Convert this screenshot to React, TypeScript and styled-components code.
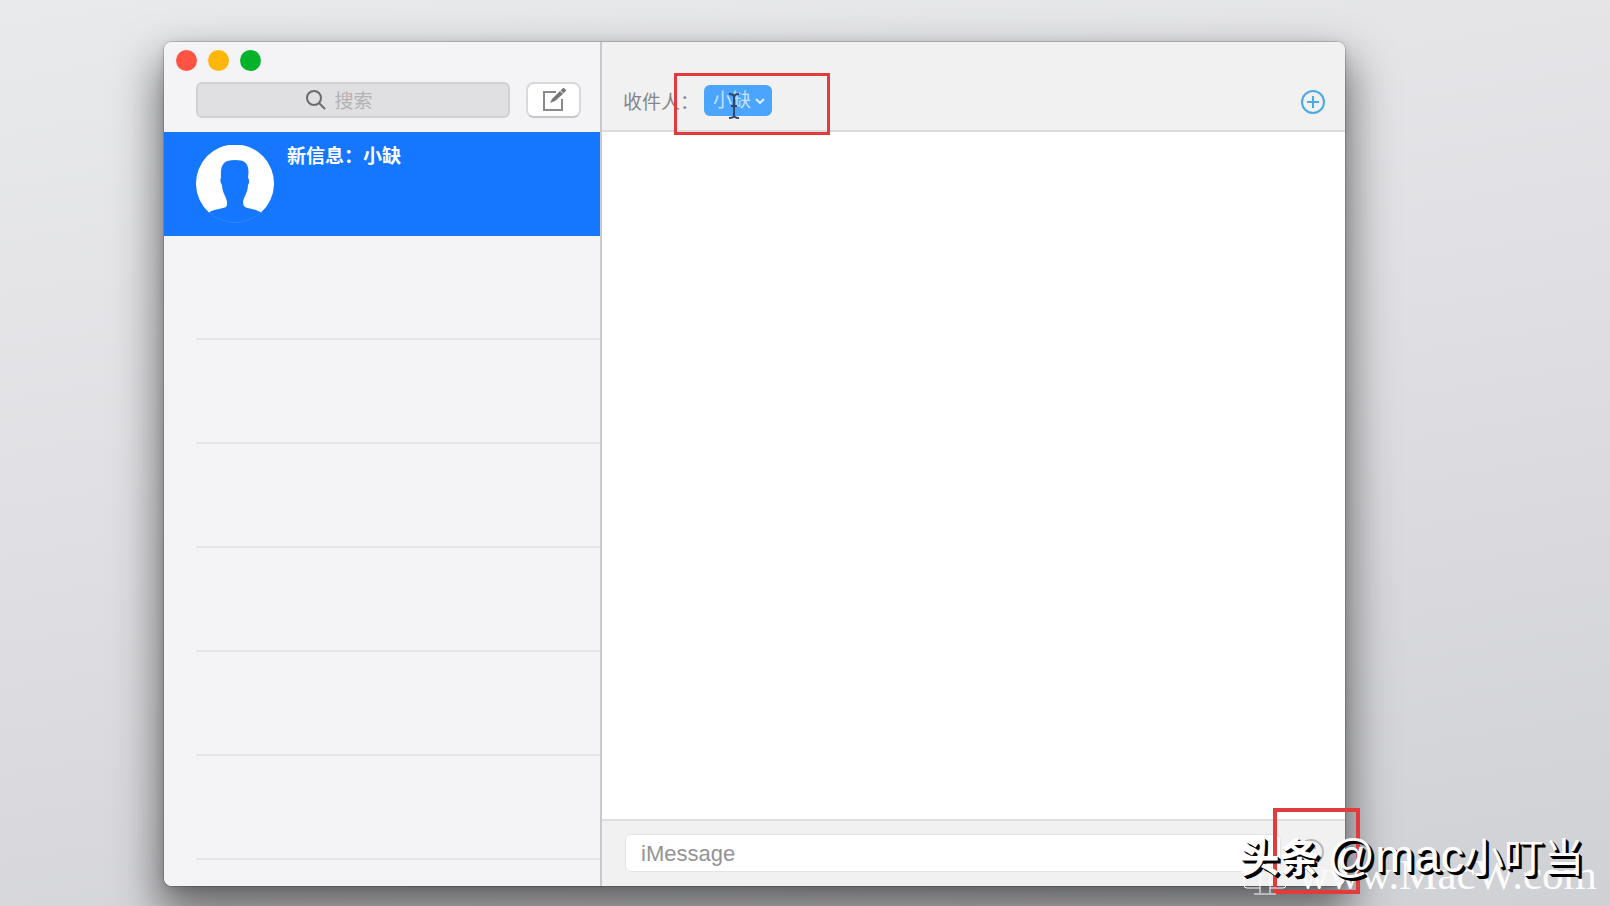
import React from "react";
import styled, { createGlobalStyle } from "styled-components";

const GlobalStyle = createGlobalStyle`
  * { box-sizing: border-box; }
  html, body, #root { height: 100%; }
  body {
    margin: 0;
    overflow: hidden;
    font-family: Inter, "Noto Sans CJK SC", sans-serif;
    background: linear-gradient(170deg, #e9eaec 0%, #e0e0e4 45%, #d0d1d5 100%);
  }
  button, input { font: inherit; margin: 0; }
`;

const Desktop = styled.main`
  position: relative;
  height: 100%;
  min-height: 480px;
  padding: 42px 265px 20px 164px;
`;

const Window = styled.div`
  display: flex;
  height: 100%;
  border-radius: 8px;
  overflow: hidden;
  background: #fff;
  box-shadow: 0 0 0 1px rgba(0, 0, 0, 0.14), 0 24px 44px 6px rgba(0, 0, 0, 0.5),
    0 2px 10px rgba(0, 0, 0, 0.16);
`;

const Sidebar = styled.aside`
  flex: 0 0 438px;
  display: flex;
  flex-direction: column;
  overflow: hidden;
  background: #f4f4f7;
  border-right: 2px solid #c9c9cc;
`;

const SidebarHeader = styled.header`
  flex: none;
  height: 90px;
  padding: 8px 19px 0 12px;
`;

const Lights = styled.div`
  display: flex;
  gap: 11px;
`;

const Light = styled.button<{ $color: string }>`
  width: 21px;
  height: 21px;
  padding: 0;
  border: 0;
  border-radius: 50%;
  background: ${(p) => p.$color};
`;

const Tools = styled.div`
  display: flex;
  gap: 16px;
  padding: 11px 0 0 20px;
`;

const SearchBox = styled.label`
  flex: 1;
  min-width: 0;
  height: 36px;
  display: flex;
  align-items: center;
  justify-content: center;
  gap: 9px;
  border: 2px solid #d1d0d3;
  border-radius: 6px;
  background: #e0dfe2;
`;

const SearchInput = styled.input`
  width: 66px;
  height: 30px;
  padding: 2px 0 0;
  border: 0;
  outline: 0;
  background: transparent;
  font-size: 19px;
  color: #555;
  &::placeholder { color: #b3b3b6; opacity: 1; }
`;

const ComposeButton = styled.button`
  width: 55px;
  height: 36px;
  display: grid;
  place-items: center;
  padding: 0;
  border: 2px solid #d9d9dc;
  border-bottom-color: #c6c6c9;
  border-radius: 8px;
  background: #fff;
`;

const List = styled.ul`
  margin: 0;
  padding: 0;
  list-style: none;
`;

const Conversation = styled.li`
  height: 104px;
  display: flex;
  gap: 13px;
  padding: 13px 32px;
  background: #1577ff;
  color: #fff;
`;

const ConversationTitle = styled.strong`
  font-size: 19px;
  line-height: 24px;
  font-weight: 700;
`;

const EmptyRow = styled.li`
  height: 104px;
  margin-left: 32px;
  border-bottom: 2px solid #e6e6e9;
`;

const Chat = styled.section`
  flex: 1;
  min-width: 0;
  display: flex;
  flex-direction: column;
`;

const ChatHeader = styled.header`
  flex: none;
  height: 90px;
  display: flex;
  align-items: center;
  padding: 28px 19px 0 21px;
  background: #f1f1f1;
  border-bottom: 2px solid #dcdcdc;
`;

const Recipient = styled.span`
  margin-right: 5px;
  font-size: 19px;
  color: #86868a;
`;

const Token = styled.button`
  height: 31px;
  display: flex;
  align-items: center;
  gap: 3px;
  padding: 2px 6px 0 9px;
  border: 0;
  border-radius: 6px;
  background: #4ba4fd;
  color: #c4e2ff;
  font-size: 19px;
  line-height: 28px;
`;

const AddButton = styled.button`
  display: grid;
  margin-left: auto;
  padding: 4px 0 0;
  border: 0;
  background: transparent;
`;

const Messages = styled.div`
  flex: 1;
`;

const Composer = styled.footer`
  flex: none;
  height: 67px;
  display: flex;
  align-items: flex-start;
  gap: 16px;
  padding: 13px 20px 0 23px;
  background: #f1f1f1;
  border-top: 2px solid #dedede;
`;

const MessageInput = styled.input`
  flex: 1;
  min-width: 0;
  height: 38px;
  padding: 2px 15px 0;
  border: 1px solid #e4e4e4;
  border-radius: 6px;
  outline: 0;
  background: #fff;
  font-family: "Liberation Sans", "Noto Sans CJK SC", sans-serif;
  font-size: 22px;
  &::placeholder { color: #939396; opacity: 1; }
`;

const EmojiButton = styled.button`
  display: grid;
  padding: 4px 0 0;
  border: 0;
  background: transparent;
`;

const Marker = styled.div<{ $w: number; $h: number }>`
  position: absolute;
  width: ${(p) => p.$w}px;
  height: ${(p) => p.$h}px;
  border: 3px solid #e33b3c;
`;

const RecipientMarker = styled(Marker)`
  left: 674px;
  top: 73px;
`;

const SendMarker = styled(Marker)`
  right: 250px;
  bottom: 12px;
  border-width: 4px;
`;

const Cursor = styled.svg`
  position: absolute;
  left: 727px;
  top: 92px;
`;

const Credit = styled.div`
  position: absolute;
  right: 26px;
  bottom: 22px;
  display: flex;
  align-items: baseline;
  color: #fff;
  font-family: "Noto Sans CJK SC", sans-serif;
  font-size: 40px;
  line-height: 56px;
  text-shadow: 1px 1px 0 #000, 2px 2px 0 #000, 3px 3px 0 #000;
  white-space: nowrap;
`;

const CreditSource = styled.span`
  margin-right: 8px;
  font-weight: 700;
`;

const CreditLatin = styled.span`
  font-family: "Liberation Sans", sans-serif;
  font-size: 47px;
`;

const Site = styled.div`
  position: absolute;
  right: 13px;
  bottom: 11px;
  display: flex;
  align-items: center;
  gap: 11px;
  color: #fbfbfb;
  font-family: "Liberation Serif", serif;
  font-size: 43px;
  line-height: 40px;
  white-space: nowrap;
`;

const SiteLogo = styled.svg`
  align-self: flex-end;
`;

const lights = [
  { name: "关闭", color: "#ff5344" },
  { name: "最小化", color: "#ffb60a" },
  { name: "缩放", color: "#05b32b" },
];

export default function App() {
  return (
    <Desktop>
      <GlobalStyle />
      <Window>
        <Sidebar>
          <SidebarHeader>
            <Lights>
              {lights.map((l) => (
                <Light key={l.name} $color={l.color} aria-label={l.name} />
              ))}
            </Lights>
            <Tools>
              <SearchBox>
                <svg width="20" height="20" viewBox="0 0 20 20" fill="none" stroke="#6b6b6e" strokeWidth="2">
                  <circle cx="8" cy="8" r="7" />
                  <path d="M13 13l6 6" />
                </svg>
                <SearchInput aria-label="搜索" placeholder="搜索" />
              </SearchBox>
              <ComposeButton aria-label="新信息">
                <svg width="24" height="24" viewBox="0 0 24 24" fill="none" stroke="#8a8a8c" strokeWidth="2">
                  <path d="M14 4H2v18h18V11" />
                  <path d="M8 15l2-4 8-8 3 3-8 7z" fill="#77777a" stroke="none" />
                  <path d="M20 4l3-3" stroke="#77777a" strokeWidth="4" />
                </svg>
              </ComposeButton>
            </Tools>
          </SidebarHeader>
          <List>
            <Conversation>
              <svg width="78" height="78" viewBox="0 0 78 78">
                <circle cx="39" cy="39" r="38.5" fill="none" stroke="#2f87ff" />
                <path
                  fill="#fff"
                  d="M13 67.500A39 39 0 1 1 65 67.500C60 64 53 64 49 62C46 59 47 55 49 51C51 47 52 43 52 40C54 37 53 34 52 33C54 19 50 15 39 15C28 15 24 19 25 33C24 34 24 37 26 40C26 43 27 47 29 51C31 55 32 59 30 62C25 64 18 64 13 67.500Z"
                />
              </svg>
              <ConversationTitle>新信息：小缺</ConversationTitle>
            </Conversation>
            {[1, 2, 3, 4, 5, 6].map((n) => (
              <EmptyRow key={n} />
            ))}
          </List>
        </Sidebar>
        <Chat>
          <ChatHeader>
            <Recipient>收件人：</Recipient>
            <Token>
              小缺
              <svg width="12" height="10" viewBox="0 0 12 10" fill="none" stroke="#dcefff" strokeWidth="2">
                <path d="M2 3l4 4 4-4" />
              </svg>
            </Token>
            <AddButton aria-label="添加收件人">
              <svg width="26" height="26" viewBox="0 0 26 26" fill="none" stroke="#48a9e6" strokeWidth="2">
                <circle cx="13" cy="13" r="11" />
                <path d="M13 7v12M7 13h12" />
              </svg>
            </AddButton>
          </ChatHeader>
          <Messages />
          <Composer>
            <MessageInput aria-label="iMessage" placeholder="iMessage" />
            <EmojiButton aria-label="表情符号">
              <svg width="28" height="28" viewBox="0 0 28 28" fill="none" stroke="#b9b9bb" strokeWidth="2">
                <circle cx="14" cy="14" r="12" />
                <path d="M8 16c2 6 10 6 12 0M10 9v2M18 9v2" />
              </svg>
            </EmojiButton>
          </Composer>
        </Chat>
      </Window>
      <Cursor width="14" height="28" viewBox="0 0 14 28" fill="none" stroke="#2f4a66" strokeWidth="2">
        <path d="M2 2c3 0 5 1 5 3c0-2 2-3 5-3M7 5v18M2 26c3 0 5-1 5-3c0 2 2 3 5 3M4 14h6" />
      </Cursor>
      <RecipientMarker $w={156} $h={62} />
      <SendMarker $w={87} $h={86} />
      <Site>
        <SiteLogo width="44" height="30" viewBox="0 0 44 30" fill="none" stroke="#fff" strokeWidth="1">
          <path d="M1 10V20q0 3 3 3h13M43 10V20q0 3-3 3H27M17 10v18M27 10v18M11 29h22" />
        </SiteLogo>
        www.MacW.com
      </Site>
      <Credit>
        <CreditSource>头条</CreditSource>
        <CreditLatin>@mac</CreditLatin>
        <span>小叮当</span>
      </Credit>
    </Desktop>
  );
}
